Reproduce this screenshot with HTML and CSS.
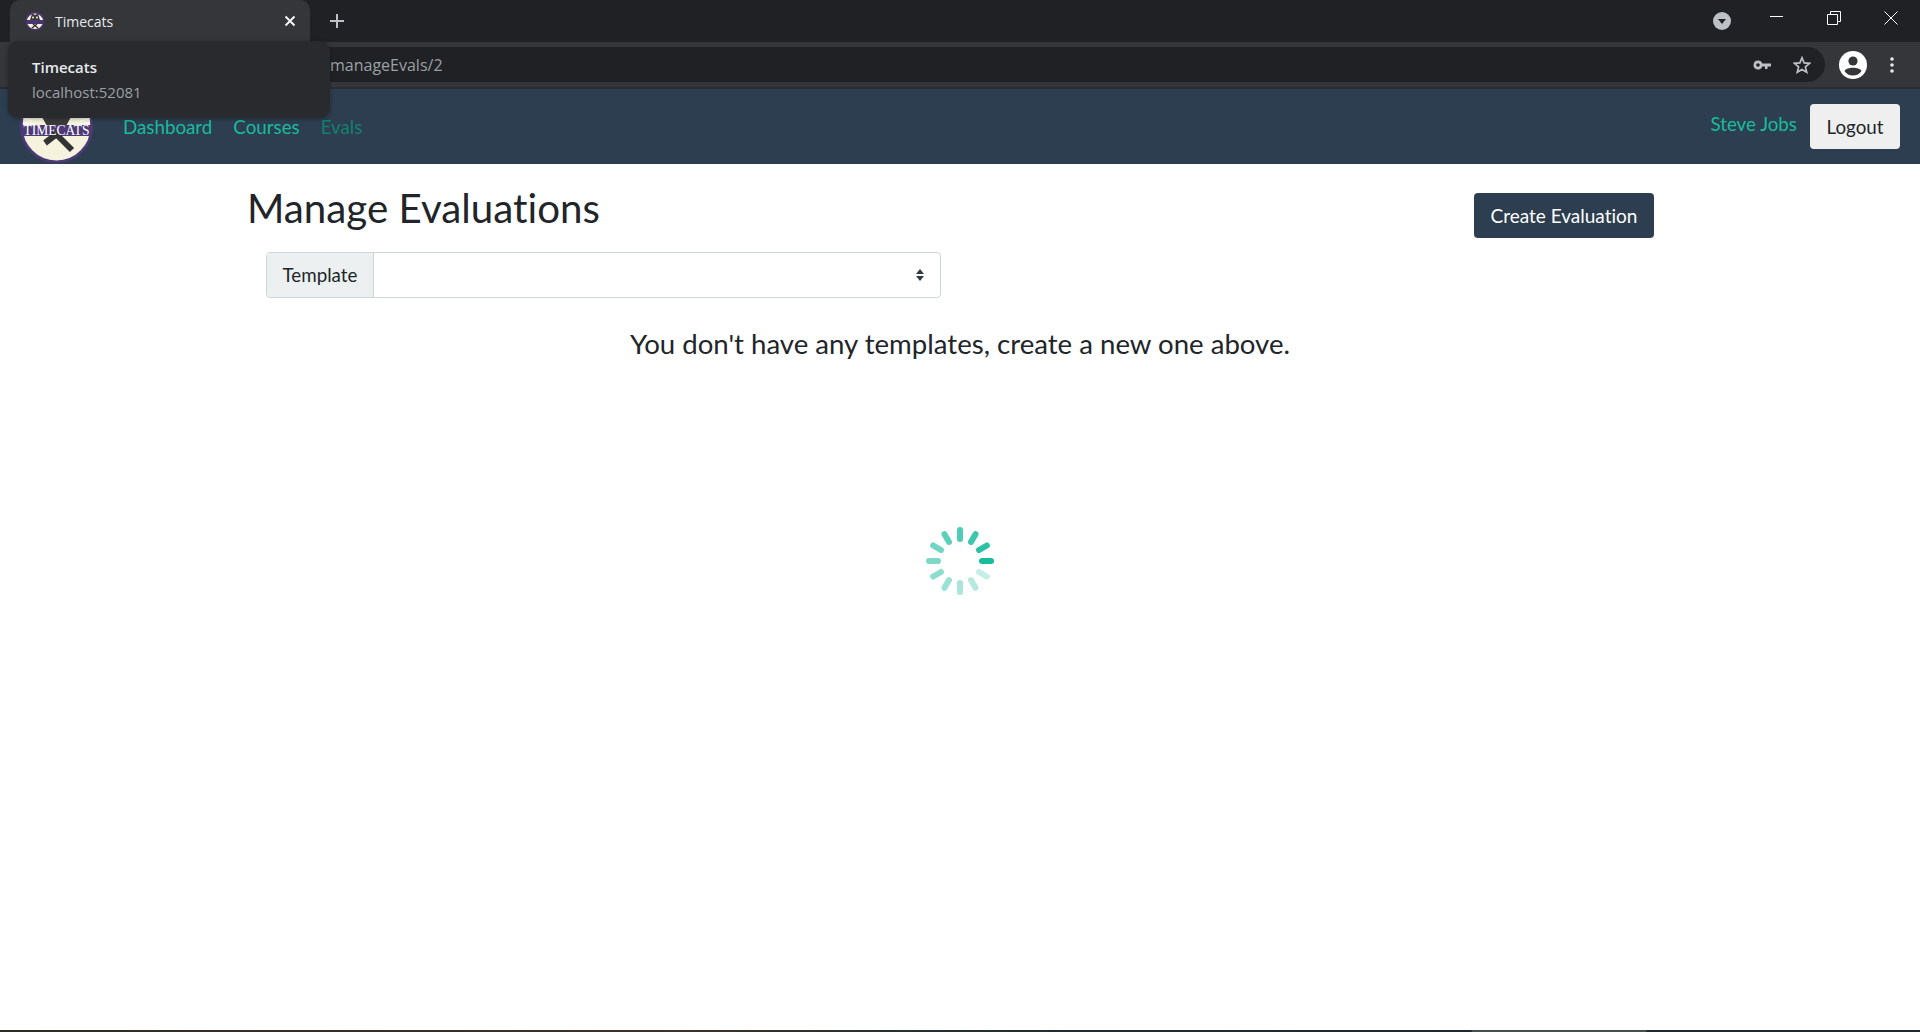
FILE: index.html
```html
<!DOCTYPE html>
<html>
	<head>
		<meta charset="utf-8">
		<title>Timecats</title>
		<link rel="stylesheet" href="styles.css">
	</head>
	<body>
		<div class="tabstrip">
			<div class="tab">
				<svg class="tab-icon" viewBox="0 0 20 20">
					<circle cx="10" cy="10" r="9.5" fill="#4b3570"/>
					<path d="M2 9 A8.2 8.2 0 0 1 18 9 Z" fill="#f5f3de"/>
					<path d="M2.5 13 H17.5 A8.2 8.2 0 0 1 2.5 13 Z" fill="#f5f3de"/>
					<path d="M5 9 L7 2.5 L10 4 L13 2.5 L15 9 Z" fill="#3a3a3a"/>
					<circle cx="8" cy="6.5" r="1" fill="#f5f3de"/>
					<circle cx="12" cy="6.5" r="1" fill="#f5f3de"/>
					<path d="M7 17 L12 13 M13 17 L8 13" stroke="#333" stroke-width="1.4"/>
				</svg>
				<span class="tab-title">Timecats</span>
				<svg class="tab-close" viewBox="0 0 12 12"><path d="M1.5 1.5 L10.5 10.5 M10.5 1.5 L1.5 10.5" stroke="#fff" stroke-width="1.8"/></svg>
			</div>
			<svg class="new-tab" viewBox="0 0 14 14"><path d="M7 0 V14 M0 7 H14" stroke="#bdc1c6" stroke-width="2"/></svg>
			<div class="strip-right">
				<div class="tab-search">
					<svg viewBox="0 0 18 18"><circle cx="9" cy="9" r="9" fill="#bdc1c6"/><path d="M5 7 H13 L9 12 Z" fill="#202124"/></svg>
				</div>
				<svg class="win-btn" viewBox="0 0 14 14"><path d="M0 5.5 H13" stroke="#fff" stroke-width="1"/></svg>
				<svg class="win-btn" viewBox="0 0 14 14"><path d="M0.5 3.5 H10.5 V13.5 H0.5 Z M3.5 3.5 V0.5 H13.5 V10.5 H10.5" fill="none" stroke="#fff" stroke-width="1"/></svg>
				<svg class="win-btn" viewBox="0 0 14 14"><path d="M0.5 0.5 L13.5 13.5 M13.5 0.5 L0.5 13.5" stroke="#fff" stroke-width="1"/></svg>
			</div>
		</div>
		<div class="toolbar">
			<div class="omnibox">
				<span class="url">manageEvals/2</span>
				<svg class="key" viewBox="0 0 18 10"><path d="M5 0.5 A4.5 4.5 0 1 0 9.3 6.5 H12 V9 H14.5 V6.5 H18 V3.5 H9.3 A4.5 4.5 0 0 0 5 0.5 Z M5 3.2 A1.8 1.8 0 1 1 5 6.8 A1.8 1.8 0 1 1 5 3.2 Z" fill="#bdc1c6" fill-rule="evenodd"/></svg>
				<svg class="star" viewBox="0 0 18 18"><path d="M9 1.8 L11.1 6.9 L16.6 7.3 L12.4 10.9 L13.7 16.2 L9 13.4 L4.3 16.2 L5.6 10.9 L1.4 7.3 L6.9 6.9 Z" fill="none" stroke="#bdc1c6" stroke-width="1.7"/></svg>
			</div>
			<svg class="avatar" viewBox="0 0 28 28">
				<circle cx="14" cy="14" r="14" fill="#fff"/>
				<circle cx="14" cy="10" r="4.6" fill="#35363a"/>
				<path d="M5.5 20 C7.5 15.8 20.5 15.8 22.5 20 C20.5 23 17.5 24.5 14 24.5 C10.5 24.5 7.5 23 5.5 20 Z" fill="#35363a"/>
			</svg>
			<svg class="dots" viewBox="0 0 4 16"><circle cx="2" cy="2" r="1.8" fill="#e8eaed"/><circle cx="2" cy="8" r="1.8" fill="#e8eaed"/><circle cx="2" cy="14" r="1.8" fill="#e8eaed"/></svg>
		</div>

		<nav class="navbar">
			<svg class="logo" viewBox="0 0 73 73">
				<circle cx="36.5" cy="36.5" r="35.2" fill="#f5f3de" stroke="#4f3a78" stroke-width="2.6"/>
				<path d="M3 28 L12 31 M70 28 L60 31 M3 33 L14 34 M70 33 L58 34" stroke="#fff" stroke-width="1.2"/>
				<path d="M22 27 L51 27 L46 36 L27 36 Z" fill="#3a3a3a"/>
				<path d="M1 35 H72 V46 H1 Z" fill="#4f3a78"/>
				<path d="M25 53 L38 43 M52 60 L33 41" stroke="#333" stroke-width="6"/>
				<text class="logo-text" x="36.5" y="45" text-anchor="middle" textLength="66" lengthAdjust="spacingAndGlyphs">TIMECATS</text>
			</svg>
			<ul class="nav-links">
				<li><a href="#">Dashboard</a></li>
				<li><a href="#">Courses</a></li>
				<li><a href="#" class="muted">Evals</a></li>
			</ul>
			<a href="#" class="user">Steve Jobs</a>
			<button class="btn-logout">Logout</button>
		</nav>

		<main class="page">
			<div class="head-row">
				<h1>Manage Evaluations</h1>
				<button class="btn-create">Create Evaluation</button>
			</div>
			<div class="input-group">
				<span class="input-label">Template</span>
				<div class="select">
					<svg viewBox="0 0 8 12"><path d="M4 0 L8 5 H0 Z M4 12 L0 7 H8 Z" fill="#343a40"/></svg>
				</div>
			</div>
			<p class="empty">You don't have any templates, create a new one above.</p>
			<div class="spinner-wrap">
				<svg class="spinner" viewBox="-36 -36 72 72">
					<rect class="bar" x="19" y="-3" width="15" height="6" rx="3" opacity="1"/>
					<rect class="bar" x="19" y="-3" width="15" height="6" rx="3" transform="rotate(30)" opacity=".25"/>
					<rect class="bar" x="19" y="-3" width="15" height="6" rx="3" transform="rotate(60)" opacity=".32"/>
					<rect class="bar" x="19" y="-3" width="15" height="6" rx="3" transform="rotate(90)" opacity=".38"/>
					<rect class="bar" x="19" y="-3" width="15" height="6" rx="3" transform="rotate(120)" opacity=".44"/>
					<rect class="bar" x="19" y="-3" width="15" height="6" rx="3" transform="rotate(150)" opacity=".5"/>
					<rect class="bar" x="19" y="-3" width="15" height="6" rx="3" transform="rotate(180)" opacity=".56"/>
					<rect class="bar" x="19" y="-3" width="15" height="6" rx="3" transform="rotate(210)" opacity=".62"/>
					<rect class="bar" x="19" y="-3" width="15" height="6" rx="3" transform="rotate(240)" opacity=".7"/>
					<rect class="bar" x="19" y="-3" width="15" height="6" rx="3" transform="rotate(270)" opacity=".76"/>
					<rect class="bar" x="19" y="-3" width="15" height="6" rx="3" transform="rotate(300)" opacity=".84"/>
					<rect class="bar" x="19" y="-3" width="15" height="6" rx="3" transform="rotate(330)" opacity=".92"/>
				</svg>
			</div>
		</main>

		<div class="taskbar-edge"></div>

		<div class="tab-tooltip">
			<div class="tip-title">Timecats</div>
			<div class="tip-host">localhost:52081</div>
		</div>
	</body>
</html>
```

FILE: styles.css
```css
html, body {
	height: 100%;
}
body {
	margin: 0;
	display: flex;
	flex-direction: column;
	height: 1032px;
	overflow: hidden;
	background: #fff;
	font-family: Lato, "Noto Sans", sans-serif;
	font-variant-ligatures: none;
	color: #212529;
}

/* browser chrome */
.tabstrip {
	height: 42px;
	flex: none;
	display: flex;
	align-items: flex-end;
	padding-left: 10px;
	background: #202124;
}
.tab {
	width: 300px;
	height: 42px;
	box-sizing: border-box;
	padding: 0 14px 0 15px;
	display: flex;
	align-items: center;
	background: #35363a;
	border-radius: 10px 10px 0 0;
}
.tab-icon {
	width: 20px;
	height: 20px;
	margin-right: 10px;
}
.tab-title {
	flex: 1;
	font: 14px "Open Sans", "Noto Sans", sans-serif;
	color: #e8eaed;
}
.tab-close {
	width: 12px;
	height: 12px;
}
.new-tab {
	width: 14px;
	height: 14px;
	margin: 0 0 14px 20px;
}
.strip-right {
	margin-left: auto;
	height: 42px;
	display: flex;
	align-items: center;
}
.tab-search svg {
	display: block;
	width: 18px;
	height: 18px;
	margin: 0 39px 0 0;
}
.win-btn {
	width: 14px;
	height: 14px;
	margin-right: 43px;
	margin-bottom: 6px;
}
.win-btn:last-child {
	margin-right: 22px;
}
.toolbar {
	height: 45px;
	flex: none;
	display: flex;
	align-items: center;
	background: #35363a;
	border-bottom: 2px solid #2b2c2f;
	padding-left: 318px;
}
.omnibox {
	width: 1507px;
	height: 35px;
	box-sizing: border-box;
	padding-left: 12px;
	display: flex;
	align-items: center;
	background: #202124;
	border-radius: 0 18px 18px 0;
}
.url {
	flex: 1;
	font: 16px "Open Sans", "Noto Sans", sans-serif;
	color: #9aa0a6;
}
.key {
	width: 18px;
	height: 10px;
	margin-right: 22px;
}
.star {
	width: 18px;
	height: 18px;
	margin-right: 14px;
}
.avatar {
	width: 28px;
	height: 28px;
	margin-left: 14px;
}
.dots {
	width: 4px;
	height: 16px;
	margin-left: 23px;
}
.tab-tooltip {
	position: absolute;
	left: 8px;
	top: 41px;
	width: 322px;
	height: 77px;
	box-sizing: border-box;
	padding: 16px 24px 0;
	background: #292a2d;
	border-radius: 10px;
	box-shadow: 0 1px 4px rgba(0, 0, 0, .3);
	font-family: "Open Sans", "Noto Sans", sans-serif;
}
.tip-title {
	font-size: 15px;
	font-weight: 600;
	line-height: 20px;
	color: #e8eaed;
}
.tip-host {
	margin-top: 5px;
	font-size: 15px;
	line-height: 20px;
	color: #9aa0a6;
}

/* app navbar */
.navbar {
	height: 75px;
	flex: none;
	box-sizing: border-box;
	padding: 0 20px;
	display: flex;
	align-items: center;
	background: #2c3e50;
}
.logo {
	width: 73px;
	height: 73px;
	margin-right: 30px;
	align-self: flex-end;
	margin-bottom: 1px;
}
.logo-text {
	font: 14px "Liberation Serif", serif;
	fill: #fff;
}
.nav-links {
	list-style: none;
	margin: 0;
	padding: 0;
	flex: 1;
	display: flex;
	gap: 21px;
}
.nav-links a, .user {
	font-size: 18.75px;
	color: #18bc9c;
	text-decoration: none;
}
.nav-links a.muted {
	color: #12806e;
}
.user {
	margin-right: 13px;
	margin-bottom: 6px;
}
.btn-logout {
	width: 90px;
	height: 45px;
	padding: 0;
	font: 18.75px Lato, sans-serif;
	font-variant-ligatures: none;
	color: #212529;
	background: #efeff0;
	border: 0;
	border-radius: 4px;
}

/* page */
.page {
	flex: 1;
	display: flex;
	flex-direction: column;
	min-height: 0;
}
.head-row {
	height: 88px;
	flex: none;
	box-sizing: border-box;
	padding: 0 266px 0 247px;
	display: flex;
	justify-content: space-between;
	align-items: flex-start;
}
h1 {
	margin: 20px 0 0;
	font-size: 40.3px;
	font-weight: 400;
	line-height: 48px;
}
.btn-create {
	margin-top: 29px;
	width: 180px;
	height: 45px;
	padding: 0;
	font: 19px Lato, sans-serif;
	font-variant-ligatures: none;
	color: #fff;
	background: #2c3e50;
	border: 0;
	border-radius: 4px;
}
.input-group {
	width: 675px;
	height: 46px;
	margin: 0 0 0 266px;
	flex: none;
	box-sizing: border-box;
	display: flex;
	border: 1px solid #ced4da;
	border-radius: 4px;
}
.input-label {
	width: 107px;
	box-sizing: border-box;
	padding-bottom: 1px;
	display: flex;
	align-items: center;
	justify-content: center;
	font-size: 18.75px;
	color: #212529;
	background: #ecf0f1;
	border-right: 1px solid #ced4da;
	border-radius: 3px 0 0 3px;
}
.select {
	flex: 1;
	display: flex;
	align-items: center;
	justify-content: flex-end;
	padding-right: 16px;
}
.select svg {
	width: 8px;
	height: 12px;
}
.empty {
	margin: 26px 0 0;
	text-align: center;
	font-size: 27.6px;
	line-height: 40px;
	color: #212529;
}
.spinner-wrap {
	margin-top: 161px;
	display: flex;
	justify-content: center;
}
.spinner {
	width: 72px;
	height: 72px;
}
.bar {
	fill: #18bc9c;
}
.taskbar-edge {
	height: 2px;
	flex: none;
	background: linear-gradient(90deg, #2f2c28, #3a322d 35%, #1f2f2f 55%, #1b2a2c 76.6%, #444f50 76.7%, #444f50 85.7%, #1b2a2c 85.8%);
}
```
